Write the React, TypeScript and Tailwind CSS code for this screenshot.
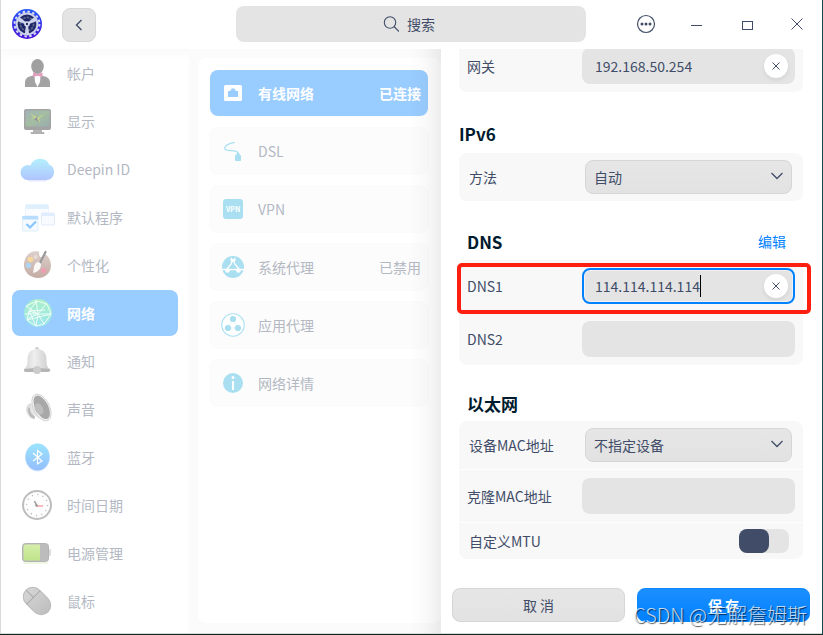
import type { ReactNode } from 'react';
import { useState } from 'react';

const FONT = "font-['Noto_Sans_CJK_SC','Noto_Sans',sans-serif]";

function AccountIcon() {
  return (
    <>
      <path d="M4 30v-4c0-5 3-6.500 8-7.500h8.500c5 1 8.500 2.500 8.500 7.500v4z" fill="#a3a3a3" />
      <path d="M13.500 19h6l-.5 6-2.500 5-2.500-5z" fill="#fff" />
      <ellipse cx="16.500" cy="9.500" rx="6.300" ry="7.400" fill="#a0a0a0" />
      <path d="M12 15.500l4.500 1.500 5-1.500v4.500l-5-1.200-4.500 1.200z" fill="#e59dbd" />
    </>
  );
}

function DisplayIcon() {
  return (
    <>
      <defs>
        <linearGradient id="screen" x1="0" y1="0" x2="1" y2="1">
          <stop offset="0" stopColor="#a3b4b8" />
          <stop offset=".5" stopColor="#a3bda0" />
          <stop offset="1" stopColor="#9aabb0" />
        </linearGradient>
      </defs>
      <rect x="12" y="24" width="9" height="4" fill="#b5b5b5" />
      <rect x="9.500" y="27" width="14" height="2" rx="1" fill="#b0b0b0" />
      <rect x="3" y="4" width="27" height="21" rx="2" fill="#a3a3a3" />
      <rect x="4.500" y="5.500" width="24" height="16" rx="1" fill="url(#screen)" />
      <path d="M9 8l7.500 5 6-4-4.500 5 1 4-4-4.500-5 .5 3-1.500z" fill="#c3d88b" />
      <path d="M13 14l4-2-1 2 2 3z" fill="#8f86a5" />
    </>
  );
}

function CloudIcon() {
  return (
    <>
      <defs>
        <linearGradient id="cloud" x1="0" y1="0" x2="0" y2="1">
          <stop offset="0" stopColor="#b3f0fd" />
          <stop offset="1" stopColor="#b0c4fe" />
        </linearGradient>
      </defs>
      <path d="M8 27.500h17" stroke="#e4ebff" strokeWidth="2" strokeLinecap="round" />
      <path d="M7.500 27a7.500 7.500 0 0 1-1-15c1.200.1 2 .1 3 .5a10.200 10.200 0 0 1 19-.5c3 .5 4.500 3.500 4.500 7a7.500 7.500 0 0 1-7.500 8z" fill="url(#cloud)" />
    </>
  );
}

function DefaultAppsIcon() {
  return (
    <>
      <rect x="4.500" y="3.500" width="23" height="13" rx="1.500" fill="#fafcff" stroke="#edf4fd" />
      <path d="M4.500 8V5.500a2 2 0 0 1 2-2h19a2 2 0 0 1 2 2V8z" fill="#e0effe" />
      <rect x="20.500" y="12" width="13" height="12" rx="1.500" fill="#f7faff" stroke="#e1ecf9" />
      <path d="M20.500 15v-1.500a1.500 1.500 0 0 1 1.500-1.500h10a1.500 1.500 0 0 1 1.500 1.500V15z" fill="#dfedff" />
      <rect x="1.500" y="15" width="15.500" height="15" rx="1" fill="#f5faff" stroke="#dfeefa" />
      <path d="M1.500 18.500V15h15.500v3.500z" fill="#b8dcfd" />
      <path d="M5.500 23l3.500 3.500 6-6" fill="none" stroke="#86c6fd" strokeWidth="2.200" />
    </>
  );
}

function PaletteIcon() {
  return (
    <>
      <defs>
        <linearGradient id="palette" x1="0" y1="0" x2="0" y2="1">
          <stop offset="0" stopColor="#dccfca" />
          <stop offset="1" stopColor="#c5aca5" />
        </linearGradient>
      </defs>
      <path d="M18 2.500C8 .500 2.500 9 3 17c.5 7 7 12 14 12 8 0 13-6 13-12.500 0-5.500-3-9.500-6-11.500l-3 3c-2 .5-3-1-3-5.500z" fill="url(#palette)" />
      <circle cx="9.500" cy="10.500" r="2.700" fill="#f9d89b" />
      <circle cx="14.500" cy="8" r="2" fill="#e8dcd8" />
      <circle cx="7.500" cy="16.500" r="2.700" fill="#aed4f3" />
      <circle cx="22.500" cy="21.500" r="2.600" fill="#f19db1" />
      <path d="M19 14l5.500-11" stroke="#9a9a9a" strokeWidth="2.200" strokeLinecap="round" />
      <path d="M15 14c2-2 4.500-.5 5 1.500 0 4-3 7.500-8 8.500 1-3 0-6.500 3-10z" fill="#fbfaf9" />
    </>
  );
}

function GlobeIcon() {
  return (
    <>
      <defs>
        <linearGradient id="globe" x1="0" y1="0" x2="0" y2="1">
          <stop offset="0" stopColor="#a9f0c8" />
          <stop offset="1" stopColor="#9be5ed" />
        </linearGradient>
      </defs>
      <circle cx="17" cy="16" r="14" fill="url(#globe)" />
      <path
        d="M5 9l11-5 10 3 4 10-7 10-8 2-9-6 2-9 16-1M8 14l9 3 13 0M15 3l2 14-11 5M17 17l6 10M17 17l8-10M4 17l13 0-2 12M16 4L8 14l7 15M6 23l24-6M5 9l12 8"
        fill="none"
        stroke="#effef6"
        strokeWidth="1"
      />
    </>
  );
}

function BellIcon() {
  return (
    <>
      <defs>
        <linearGradient id="bell" x1="0" y1="0" x2="1" y2="0">
          <stop offset="0" stopColor="#d4d4d4" />
          <stop offset=".4" stopColor="#eeeeee" />
          <stop offset="1" stopColor="#cbcbcb" />
        </linearGradient>
      </defs>
      <circle cx="16" cy="4" r="2" fill="#cfcfcf" />
      <path d="M16 4c6 0 9.500 4 9.500 10 0 6 .5 8 3.500 10 1 2-.5 3-3 3H6c-3 0-3.500-1.500-3-3 3-2 3.500-4 3.500-10C6.500 8 10 4 16 4z" fill="url(#bell)" />
      <path d="M3 24.500c6-2 20-2 26 0 .5 1.500-.5 2.500-3 2.500H6c-2.500 0-3.500-1-3-2.500z" fill="#b5b5b5" />
      <circle cx="16" cy="25" r="4" fill="#cccccc" />
    </>
  );
}

function SpeakerIcon() {
  return (
    <>
      <path d="M10 10c-4 1-6 5-4.500 9S10 27 14 26z" fill="#dedede" />
      <path d="M8.500 15c-1.500 4 1.500 8.500 5 9.500" fill="none" stroke="#b9b9b9" strokeWidth="2.500" />
      <path d="M13 1L9 17c3 5 8 9 19 11z" fill="#e6e6e6" />
      <ellipse cx="20.500" cy="14.500" rx="8" ry="14.500" transform="rotate(-27 20.500 14.500)" fill="#f3f3f3" stroke="#c9c9c9" strokeWidth=".7" />
      <ellipse cx="20.700" cy="14.300" rx="6.500" ry="12.800" transform="rotate(-27 20.700 14.300)" fill="#a8a8a8" />
      <ellipse cx="18" cy="16" rx="4" ry="6" transform="rotate(-27 18 16)" fill="#bdbdbd" />
    </>
  );
}

function BluetoothIcon() {
  return (
    <>
      <defs>
        <linearGradient id="bluetooth" x1="0" y1="0" x2="0" y2="1">
          <stop offset="0" stopColor="#9be5fd" />
          <stop offset="1" stopColor="#94bdfc" />
        </linearGradient>
      </defs>
      <ellipse cx="16.500" cy="16.500" rx="12.500" ry="14" fill="#dcecff" />
      <ellipse cx="16.500" cy="16" rx="12" ry="13.500" fill="url(#bluetooth)" />
      <path d="M12 12l9 8-4.500 3V9.500L21 13l-9 7" fill="none" stroke="#fff" strokeWidth="1.200" />
    </>
  );
}

function ClockIcon() {
  return (
    <>
      <circle cx="16" cy="16.500" r="14.500" fill="#f0f0f0" />
      <circle cx="16" cy="16" r="14" fill="#fdfdfd" stroke="#bdbdbd" strokeWidth="2" />
      <circle cx="16" cy="16" r="10.500" fill="none" stroke="#b5b5b5" strokeWidth="1.500" strokeDasharray="1 4.500" />
      <path d="M16 17l-2.500-5" stroke="#9d9d9d" strokeWidth="1.600" />
      <path d="M16 17h6" stroke="#f5aaaa" strokeWidth="1.600" />
      <circle cx="15.500" cy="16.500" r="1.300" fill="#999" />
    </>
  );
}

function BatteryIcon() {
  return (
    <>
      <defs>
        <linearGradient id="battery" x1="0" y1="0" x2="0" y2="1">
          <stop offset="0" stopColor="#d5eea9" />
          <stop offset="1" stopColor="#bfe48c" />
        </linearGradient>
      </defs>
      <rect x="2" y="24" width="25" height="3" rx="1.500" fill="#f0f6e4" />
      <rect x="28" y="12" width="2" height="7" rx="1" fill="#dcdcdc" />
      <rect x="1.500" y="6.500" width="26" height="18" rx="3" fill="#bcbcbc" stroke="#b3b3b3" />
      <path d="M4.500 7.500H19v16H4.500a2 2 0 0 1-2-2v-12a2 2 0 0 1 2-2z" fill="url(#battery)" />
    </>
  );
}

function MouseIcon() {
  return (
    <>
      <defs>
        <linearGradient id="mouse" x1="0" y1="0" x2="0" y2="1">
          <stop offset="0" stopColor="#d6d6d6" />
          <stop offset="1" stopColor="#bfbfbf" />
        </linearGradient>
      </defs>
      <g transform="rotate(-45 16 16)">
        <rect x="6.500" y=".5" width="19" height="31" rx="9.500" fill="url(#mouse)" stroke="#bababa" />
        <path d="M6.500 11h19M16 1v10" fill="none" stroke="#a9a9a9" />
      </g>
    </>
  );
}

function WiredIcon() {
  return (
    <>
      <rect x="3" y="4" width="18" height="16" rx="1.500" fill="#fff" />
      <path d="M7 16V10h2.500V8.500h1V7.500h3v1h1V10H17v6z" fill="#99ccff" />
    </>
  );
}

function DslIcon() {
  return (
    <>
      <path d="M13.700 3.300C8 4.500 3.500 7 3.700 9.500c.3 3.500 12 1 13 4V17" fill="none" stroke="#a9dff1" strokeWidth="1.300" />
      <rect x="14" y="16" width="6" height="6" rx="1" fill="#a9dff1" />
      <rect x="15.500" y="14" width="3" height="3" fill="#a9dff1" />
    </>
  );
}

function VpnIcon() {
  return (
    <>
      <rect x="2" y="2" width="20" height="20" rx="3" fill="#a9dff1" />
      <text x="12" y="15" fontSize="7" fontWeight="700" textAnchor="middle" fill="#fff">
        VPN
      </text>
    </>
  );
}

function SystemProxyIcon() {
  return (
    <>
      <circle cx="12" cy="12" r="11" fill="#a9dff1" />
      <circle cx="12" cy="4.500" r="2.600" fill="#fff" />
      <path d="M11 5l-.5 3.500L6 14M13 5l.5 3.500L18 14M1 14.500h22" fill="none" stroke="#fff" strokeWidth="1.300" />
      <circle cx="6.500" cy="15.500" r="2.300" fill="#fff" />
      <circle cx="17.500" cy="15.500" r="2.300" fill="#fff" />
      <path d="M9 13.500c0-4.500 6-4.500 6 0z" fill="#a9dff1" />
      <circle cx="12" cy="2.500" r="1.500" fill="#a9dff1" />
    </>
  );
}

function AppProxyIcon() {
  return (
    <>
      <circle cx="12" cy="12" r="11.200" fill="#fff" stroke="#a9dff1" strokeWidth="1.100" />
      <path d="M12 6L7 15h10z" fill="none" stroke="#e9f7fb" />
      <circle cx="12" cy="6" r="3.100" fill="#a9dff1" />
      <circle cx="7" cy="15" r="3.100" fill="#a9dff1" />
      <circle cx="17" cy="15" r="3.100" fill="#a9dff1" />
    </>
  );
}

function InfoIcon() {
  return (
    <>
      <circle cx="12" cy="12" r="10" fill="#a9dff1" />
      <circle cx="12" cy="6.500" r="1.500" fill="#fff" />
      <rect x="11" y="10" width="2" height="9" fill="#fff" />
    </>
  );
}

function AppLogo() {
  const spokes = [0, 120, 240];
  return (
    <svg viewBox="0 0 30 30" className="size-[30px] shrink-0" aria-hidden="true">
      <defs>
        <linearGradient id="logo" x1="0" y1="0" x2="0" y2="1">
          <stop offset="0" stopColor="#2458fb" />
          <stop offset="1" stopColor="#4a12d8" />
        </linearGradient>
      </defs>
      <circle cx="15" cy="15" r="15" fill="url(#logo)" />
      <circle cx="15" cy="15" r="12.400" fill="none" stroke="#d7dbee" strokeWidth="2" strokeDasharray="2.500 2.370" />
      <circle cx="15" cy="15" r="11.400" fill="#cdd3ea" />
      <circle cx="15" cy="15" r="9.400" fill="#1f2769" />
      <circle cx="15" cy="15" r="6.600" fill="none" stroke="#5d6689" strokeWidth="1.800" strokeDasharray="2.400 1" />
      {spokes.map((angle) => (
        <path key={angle} d="M14.200 15h1.600l1.400 10h-4.400z" fill="#cdd3ea" transform={`rotate(${angle} 15 15)`} />
      ))}
      <circle cx="15" cy="15" r="2.800" fill="#d9deef" />
      <circle cx="15" cy="15" r="1.200" fill="#2b3168" />
    </svg>
  );
}

const modules: { name: string; icon: ReactNode }[] = [
  { name: '帐户', icon: <AccountIcon /> },
  { name: '显示', icon: <DisplayIcon /> },
  { name: 'Deepin ID', icon: <CloudIcon /> },
  { name: '默认程序', icon: <DefaultAppsIcon /> },
  { name: '个性化', icon: <PaletteIcon /> },
  { name: '网络', icon: <GlobeIcon /> },
  { name: '通知', icon: <BellIcon /> },
  { name: '声音', icon: <SpeakerIcon /> },
  { name: '蓝牙', icon: <BluetoothIcon /> },
  { name: '时间日期', icon: <ClockIcon /> },
  { name: '电源管理', icon: <BatteryIcon /> },
  { name: '鼠标', icon: <MouseIcon /> },
];

const connections: { name: string; status?: string; icon: ReactNode }[] = [
  { name: '有线网络', status: '已连接', icon: <WiredIcon /> },
  { name: 'DSL', icon: <DslIcon /> },
  { name: 'VPN', icon: <VpnIcon /> },
  { name: '系统代理', status: '已禁用', icon: <SystemProxyIcon /> },
  { name: '应用代理', icon: <AppProxyIcon /> },
  { name: '网络详情', icon: <InfoIcon /> },
];

function TitleBar() {
  return (
    <header className="flex h-[49px] shrink-0 items-start bg-white pl-[11px]">
      <div className="pt-[9px]">
        <AppLogo />
      </div>
      <button
        type="button"
        aria-label="返回"
        className="mt-2 ml-5 flex size-[34px] shrink-0 items-center justify-center rounded-lg border border-[#d9d9d9] bg-[#e4e4e4]"
      >
        <svg viewBox="0 0 12 12" className="size-3" fill="none" stroke="#414d68" strokeWidth="1.400">
          <path d="M8.500 1L3.500 6l5 5" />
        </svg>
      </button>
      <label className="mt-1.5 mr-[35px] ml-[140px] flex h-9 flex-1 items-center justify-center gap-2 rounded-lg bg-[#e4e4e4] pr-1">
        <svg viewBox="0 0 16 16" className="size-4" fill="none" stroke="#414d68" strokeWidth="1.100">
          <circle cx="7" cy="6.500" r="5.700" />
          <path d="M11 10.500l5 5" />
        </svg>
        <input
          type="search"
          aria-label="搜索"
          placeholder="搜索"
          className="[field-sizing:content] bg-transparent text-sm outline-none placeholder:text-[#414d68]"
        />
      </label>
      <div className="flex h-12">
        <button type="button" aria-label="菜单" className="flex w-[50px] items-center justify-center">
          <svg viewBox="0 0 20 20" className="size-5" fill="none" stroke="#414d68" strokeWidth="1.200">
            <circle cx="10" cy="10" r="8.500" />
            <g fill="#414d68" stroke="none">
              <circle cx="6" cy="10" r="1.500" />
              <circle cx="10" cy="10" r="1.500" />
              <circle cx="14" cy="10" r="1.500" />
            </g>
          </svg>
        </button>
        <button type="button" aria-label="最小化" className="flex w-[51px] items-center justify-center pt-0.5">
          <span className="h-px w-[11px] bg-[#414d68]" />
        </button>
        <button type="button" aria-label="最大化" className="flex w-[50px] items-center justify-center pt-0.5">
          <span className="h-[9px] w-[11px] border border-[#414d68]" />
        </button>
        <button type="button" aria-label="关闭" className="flex w-[50px] items-center justify-center">
          <svg viewBox="0 0 12 12" className="size-3" fill="none" stroke="#414d68">
            <path d="M.5.500l11 11M11.500.500l-11 11" />
          </svg>
        </button>
      </div>
    </header>
  );
}

function Sidebar() {
  return (
    <nav className="w-[188px] shrink-0 overflow-hidden bg-linear-to-b from-[#fafafa] to-white to-[12px]">
      <ul className="flex flex-col gap-0.5 px-[11px] pt-px">
        {modules.map(({ name, icon }) => {
          const active = name === '网络';
          return (
            <li key={name}>
              <button
                type="button"
                className={
                  active
                    ? 'flex h-[46px] w-full items-center gap-3.5 rounded-lg bg-[#99ccff] pl-[9px] text-sm font-bold text-white'
                    : 'flex h-[46px] w-full items-center gap-3.5 rounded-lg pl-[9px] text-sm text-[#b3b8c3]'
                }
              >
                <svg viewBox="0 0 32 32" className="size-8 overflow-visible" aria-hidden="true">
                  {icon}
                </svg>
                {name}
              </button>
            </li>
          );
        })}
      </ul>
    </nav>
  );
}

function ConnectionList() {
  return (
    <section className="relative min-w-0 flex-1 overflow-hidden bg-[#fbfbfb] pt-[9px] pb-2.5 pl-[9px]">
      <ul className="flex h-full flex-col gap-3 rounded-lg bg-white p-3 pr-[13px]">
        {connections.map(({ name, status, icon }, index) => (
          <li key={name}>
            <button
              type="button"
              className={
                index === 0
                  ? 'flex h-[46px] w-full items-center rounded-lg bg-[#99ccff] pr-[7px] pl-[11px] text-sm font-bold text-white'
                  : 'flex h-[46px] w-full items-center rounded-lg bg-[#fcfcfc] pr-[7px] pl-[11px] text-sm text-[#b3b8c3] ring-1 ring-[#fbfbfb]'
              }
            >
              <svg viewBox="0 0 24 24" className="mr-[13px] size-6" aria-hidden="true">
                {icon}
              </svg>
              <span className="flex-1 text-left">{name}</span>
              {status && <span>{status}</span>}
            </button>
          </li>
        ))}
      </ul>
      <div className="pointer-events-none absolute inset-y-0 right-0 w-8 bg-linear-to-r from-black/0 via-black/2 to-black/7" />
    </section>
  );
}

function TextField({ id, label, value, focused }: { id: string; label: string; value?: string; focused?: boolean }) {
  const [text, setText] = useState(value ?? '');
  return (
    <div className="relative flex h-[52px] items-center justify-between px-2">
      <label htmlFor={id}>{label}</label>
      <div
        className={
          focused
            ? 'flex h-9 w-[213px] items-center rounded-lg border-2 border-[#0081ff] bg-[#e4e4e4] pr-[5px] pl-[11px] shadow-[inset_0_0_0_1px_#f2f2f2]'
            : 'flex h-9 w-[213px] items-center rounded-lg bg-[#e4e4e4] pr-[7px] pl-[13px]'
        }
      >
        <input
          id={id}
          value={text}
          onChange={(event) => setText(event.target.value)}
          className={focused ? '[field-sizing:content] bg-transparent outline-none' : 'w-full bg-transparent outline-none'}
        />
        {focused && <span className="h-[22px] w-px bg-black" />}
        {text && (
          <button
            type="button"
            aria-label="清除"
            onClick={() => setText('')}
            className="ml-auto flex size-6 shrink-0 items-center justify-center rounded-full bg-white shadow-[0_2px_4px_#00000014]"
          >
            <svg viewBox="0 0 8 8" className="size-2" fill="none" stroke="#414d68" strokeWidth="1">
              <path d="M.5.500l7 7M7.500.500l-7 7" />
            </svg>
          </button>
        )}
      </div>
      {focused && (
        <div className="pointer-events-none absolute top-[3px] -right-2 -left-0.5 h-[51px] rounded-[5px] border-4 border-[#ff1f10]" />
      )}
    </div>
  );
}

function SelectField({ id, label, option }: { id: string; label: string; option: string }) {
  return (
    <div className="flex h-12 items-center justify-between pr-[11px] pl-2.5">
      <label htmlFor={id}>{label}</label>
      <div className="relative w-[207px]">
        <select
          id={id}
          className="h-[34px] w-full appearance-none rounded-lg border border-[#d6d6d6] bg-linear-to-b from-[#e6e6e6] to-[#e2e2e2] px-2"
        >
          <option>{option}</option>
        </select>
        <svg
          viewBox="0 0 12 8"
          className="pointer-events-none absolute top-3 right-[9px] h-2 w-3"
          fill="none"
          stroke="#414d68"
          strokeWidth="1.300"
        >
          <path d="M.5 1L6 6.500 11.500 1" />
        </svg>
      </div>
    </div>
  );
}

function SettingsPanel() {
  return (
    <section className="flex w-[381px] shrink-0 flex-col bg-white text-sm text-[#414d68]">
      <div className="min-h-0 flex-1 overflow-hidden pr-[19px] pl-[18px]">
        <div className="-mt-[9px] rounded-lg bg-[#f8f8f8]">
          <TextField id="gateway" label="网关" value="192.168.50.254" />
        </div>

        <h2 className="mt-[30px] mb-[7px] text-[17px] leading-6 font-bold text-[#001a2e]">IPv6</h2>
        <div className="rounded-lg bg-[#f8f8f8]">
          <SelectField id="ipv6-method" label="方法" option="自动" />
        </div>

        <div className="mt-[29px] mb-1.5 flex items-start justify-between pr-[17px] pl-2">
          <h2 className="text-[17px] leading-6 font-bold text-[#001a2e]">DNS</h2>
          <button type="button" className="leading-[22px] text-[#0081ff]">
            编辑
          </button>
        </div>
        <div className="flex flex-col gap-px rounded-lg bg-[#f8f8f8]">
          <TextField id="dns1" label="DNS1" value="114.114.114.114" focused />
          <TextField id="dns2" label="DNS2" />
        </div>

        <h2 className="mt-[27px] mb-[5px] pl-2 text-[17px] leading-6 font-bold text-[#001a2e]">以太网</h2>
        <div className="flex flex-col gap-px overflow-hidden rounded-lg [&>*]:bg-[#f8f8f8]">
          <SelectField id="device-mac" label="设备MAC地址" option="不指定设备" />
          <TextField id="clone-mac" label="克隆MAC地址" />
          <div className="flex h-9 items-center justify-between pr-3.5 pl-2.5">
            <label htmlFor="custom-mtu">自定义MTU</label>
            <input
              id="custom-mtu"
              type="checkbox"
              role="switch"
              className="h-6 w-[50px] appearance-none rounded-lg bg-[#e4e4e4] before:block before:h-6 before:w-[30px] before:rounded-lg before:bg-[#414d68] checked:before:ml-5"
            />
          </div>
        </div>
      </div>
      <footer className="relative flex gap-3 pr-3 pb-[11px] pl-[11px]">
        <button
          type="button"
          className="h-[34px] flex-1 rounded-lg border border-[#d6d6d6] bg-linear-to-b from-[#e6e6e6] to-[#e2e2e2]"
        >
          取 消
        </button>
        <button
          type="button"
          className="h-[34px] flex-1 rounded-lg border border-[#0d88ff] bg-linear-to-b from-[#1a8fff] to-[#0081ff] font-bold text-white"
        >
          保 存
        </button>
        <span className="pointer-events-none absolute right-[15px] bottom-1 text-[20px] leading-7 font-light whitespace-nowrap text-white/75 [text-shadow:1px_1px_1px_#000000b0]">
          CSDN @无解詹姆斯
        </span>
      </footer>
    </section>
  );
}

export default function App() {
  return (
    <div className={`h-screen w-full border-r border-b border-r-[#0f4a52] border-b-[#10281c] ${FONT}`}>
      <div className="flex h-full flex-col border-b border-l border-[#d9d9d9] bg-white">
        <TitleBar />
        <main className="flex min-h-0 flex-1">
          <Sidebar />
          <ConnectionList />
          <SettingsPanel />
        </main>
      </div>
    </div>
  );
}
